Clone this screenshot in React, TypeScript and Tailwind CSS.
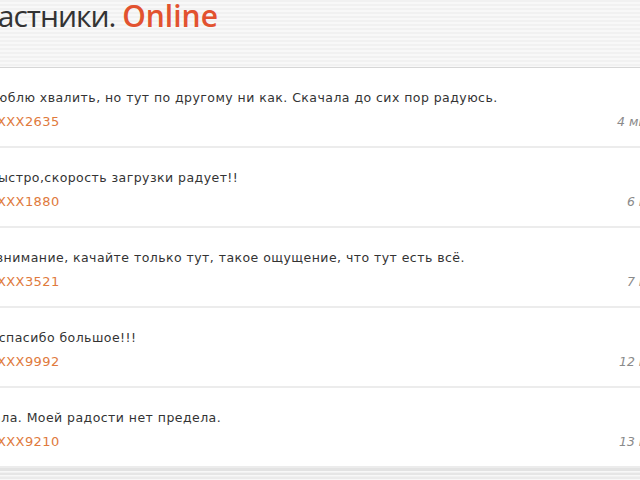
const reviews = [
  { text: "Не люблю хвалить, но тут по другому ни как. Скачала до сих пор радуюсь.", indent: "indent-0", user: "+7XXX2635", time: "4 минуты назад" },
  { text: "Быстро,скорость загрузки радует!!", indent: "indent-[23px]", user: "+7XXX1880", time: "6 минут назад" },
  { text: "Всем внимание, качайте только тут, такое ощущение, что тут есть всё.", indent: "indent-[-9px]", user: "+7XXX3521", time: "7 минут назад" },
  { text: "Всем спасибо большое!!!", indent: "indent-[-6px]", user: "+7XXX9992", time: "12 минут назад" },
  { text: "Скачала. Моей радости нет предела.", indent: "indent-[-6px]", user: "+7XXX9210", time: "13 минут назад" },
]

export default function App() {
  return (
    <div className="w-[640px] h-[480px] overflow-hidden bg-[repeating-linear-gradient(180deg,#f1f1f1_0px,#f1f1f1_2px,#f8f8f8_2px,#f8f8f8_4px)]">
      <div className="-ml-[34px] w-[796px]">
        <div className="h-[68px] border-b border-[#d6d6d6]">
          <h2 className="-ml-[3px] text-[30px] leading-[32px] text-[#333] font-['Open_Sans',sans-serif]">
            <span className="tracking-[-1px]">Участники. </span>
            <span className="font-semibold text-[#e2522f]">Online</span>
          </h2>
        </div>
        <div className="bg-white font-['DejaVu_Sans',sans-serif] text-[12.5px]">
          {reviews.map((r, i) => (
            <div
              key={i}
              className="h-[80px] border-b-2 border-[#ececec] pt-[21px] pr-[40px]"
            >
              <p className={`${r.indent} text-[#333] leading-[18px] tracking-[0.45px]`}>{r.text}</p>
              <div className="mt-[6px] flex justify-between leading-[18px]">
                <span className="ml-[11px] text-[13px] tracking-[0.4px] text-[#e07a3c]">{r.user}</span>
                <span className="italic text-[#8a8a8a]">{r.time}</span>
              </div>
            </div>
          ))}
        </div>
        <div className="h-[3px] bg-[#e3e3e3]" />
        <div className="mt-[2px] h-[2px] bg-[#e6e6e6]" />
        <div className="mt-[2px] h-[2px] bg-[#ebebeb]" />
      </div>
    </div>
  )
}
